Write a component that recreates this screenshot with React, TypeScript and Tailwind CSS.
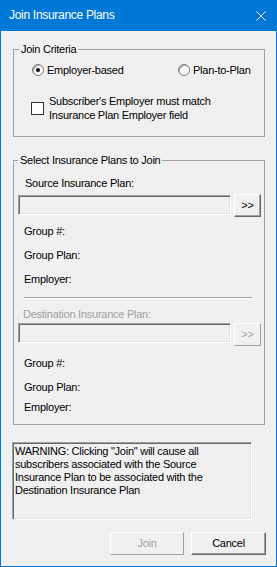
import React from "react";

function Radio({ checked }: { checked?: boolean }) {
  return (
    <span className="w-[12px] h-[12px] rounded-full border border-[#7a7a7a] bg-white flex items-center justify-center shadow-[inset_1px_1px_0_#a0a0a0]">
      {checked && <span className="w-[4px] h-[4px] rounded-full bg-black" />}
    </span>
  );
}

function TextBox() {
  return (
    <div className="w-[213px] h-[20px] bg-[#f0f0f0] border border-t-[#a0a0a0] border-l-[#a0a0a0] border-b-white border-r-white shadow-[inset_1px_1px_0_#696969,inset_-1px_-1px_0_#e3e3e3]" />
  );
}

function MoreButton({ disabled }: { disabled?: boolean }) {
  return disabled ? (
    <div className="ml-[3px] w-[27px] h-[23px] flex items-center justify-center border border-t-white border-l-white border-b-[#a0a0a0] border-r-[#a0a0a0] text-[#a0a0a0]">
      &gt;&gt;
    </div>
  ) : (
    <div className="ml-[3px] w-[27px] h-[23px] flex items-center justify-center border border-t-white border-l-white border-b-[#696969] border-r-[#696969] shadow-[inset_-1px_-1px_0_#a0a0a0] text-black">
      &gt;&gt;
    </div>
  );
}

export default function App() {
  return (
    <div className="w-[277px] h-[567px] flex flex-col bg-[#f0f0f0] text-[11px] leading-[13px] tracking-[-0.25px] text-black font-['Liberation_Sans',Arial,sans-serif]">
      <div className="h-[31px] shrink-0 bg-[#0078d7] flex items-center justify-between pl-[9px] pr-[11px] text-white text-[12px] tracking-[-0.3px]">
        <span>Join Insurance Plans</span>
        <svg width="10" height="10" viewBox="0 0 10 10" className="block">
          <path d="M0.5 0.5 L9.5 9.5 M9.5 0.5 L0.5 9.5" stroke="white" strokeWidth="1" />
        </svg>
      </div>
      <div className="flex-1 flex flex-col border-x border-b border-[#0078d7]">
        <fieldset className="mt-[12px] ml-[12px] w-[252px] border border-[#a0a0a0] pb-[14px]">
          <legend className="ml-[5px] px-[2px] leading-[13px]">Join Criteria</legend>
          <div className="mt-[7px] h-[14px] flex items-center pl-[18px]">
            <div className="w-[146px] flex items-center gap-[3px]">
              <Radio checked />
              <span>Employer-based</span>
            </div>
            <div className="flex items-center gap-[3px]">
              <Radio />
              <span>Plan-to-Plan</span>
            </div>
          </div>
          <div className="mt-[17px] flex items-center pl-[17px] gap-[5px]">
            <span className="w-[13px] h-[13px] border border-[#333333] bg-white shrink-0" />
            <span className="leading-[14px]">
              Subscriber's Employer must match
              <br />
              Insurance Plan Employer field
            </span>
          </div>
        </fieldset>

        <fieldset className="mt-[17px] ml-[12px] w-[252px] border border-[#a0a0a0] pb-[10px] flex flex-col">
          <legend className="ml-[4px] px-[2px] leading-[13px]">Select Insurance Plans to Join</legend>
          <div className="mt-[9px] h-[14px] leading-[14px] pl-[11px]">Source Insurance Plan:</div>
          <div className="mt-[4px] ml-[4px] flex items-start">
            <div className="mt-[1px]">
              <TextBox />
            </div>
            <MoreButton />
          </div>
          <div className="mt-[7px] h-[14px] leading-[14px] pl-[10px]">Group #:</div>
          <div className="mt-[10px] h-[14px] leading-[14px] pl-[10px]">Group Plan:</div>
          <div className="mt-[10px] h-[14px] leading-[14px] pl-[10px]">Employer:</div>
          <div className="mt-[11px] ml-[10px] w-[228px] border-t border-t-[#a0a0a0] border-b border-b-white" />
          <div className="mt-[8px] h-[14px] leading-[14px] pl-[9px] text-[#a0a0a0]">Destination Insurance Plan:</div>
          <div className="mt-[2px] ml-[4px] flex items-start">
            <TextBox />
            <MoreButton disabled />
          </div>
          <div className="mt-[10px] h-[14px] leading-[14px] pl-[10px]">Group #:</div>
          <div className="mt-[10px] h-[14px] leading-[14px] pl-[10px]">Group Plan:</div>
          <div className="mt-[6px] h-[14px] leading-[14px] pl-[10px]">Employer:</div>
        </fieldset>

        <div className="mt-[17px] ml-[11px] w-[240px] h-[78px] border border-t-[#a0a0a0] border-l-[#a0a0a0] border-b-white border-r-white shadow-[inset_1px_1px_0_#696969,inset_-1px_-1px_0_#e3e3e3] pt-[2px] pl-[2px] leading-[13px]">
          WARNING: Clicking "Join" will cause all
          <br />
          subscribers associated with the Source
          <br />
          Insurance Plan to be associated with the
          <br />
          Destination Insurance Plan
        </div>

        <div className="mt-[12px] flex justify-end gap-[7px] pr-[10px]">
          <div className="w-[74px] h-[23px] flex items-center justify-center border border-t-white border-l-white border-b-[#a0a0a0] border-r-[#a0a0a0] text-[#a0a0a0]">
            Join
          </div>
          <div className="w-[75px] h-[23px] flex items-center justify-center border border-t-white border-l-white border-b-[#696969] border-r-[#696969] shadow-[inset_-1px_-1px_0_#a0a0a0]">
            Cancel
          </div>
        </div>
      </div>
    </div>
  );
}
